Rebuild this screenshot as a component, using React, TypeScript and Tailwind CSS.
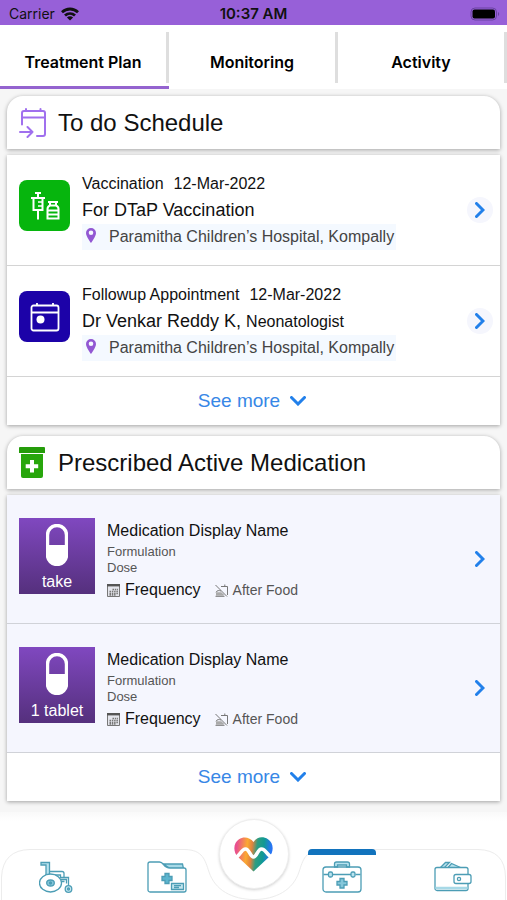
import type { ReactNode } from 'react';

const tabs = ['Treatment Plan', 'Monitoring', 'Activity'];

const schedules = [
  {
    type: 'Vaccination',
    date: '12-Mar-2022',
    title: 'For DTaP Vaccination',
    role: '',
    place: 'Paramitha Children’s Hospital, Kompally',
    icon: <VaccineIcon />,
    color: 'bg-[#06b50d]',
  },
  {
    type: 'Followup Appointment',
    date: '12-Mar-2022',
    title: 'Dr Venkar Reddy K,',
    role: 'Neonatologist',
    place: 'Paramitha Children’s Hospital, Kompally',
    icon: <AppointmentIcon />,
    color: 'bg-[#1c02a8]',
  },
];

const medications = [
  { id: 1, amount: 'take' },
  { id: 2, amount: '1 tablet' },
];

function WifiIcon() {
  return (
    <svg width="18" height="14" viewBox="0 0 18 14" fill="none" stroke="#111" strokeWidth="2.8">
      <path d="M1 5.2C5.6.9 12.4.9 17 5.2" />
      <path d="M4 8.6C6.9 5.9 11.1 5.9 14 8.6" />
      <path d="M9 13.6 5.9 10.5C7.7 8.9 10.3 8.9 12.1 10.5Z" fill="#111" stroke="none" />
    </svg>
  );
}

function BatteryIcon() {
  return (
    <svg width="30" height="14" viewBox="0 0 30 14">
      <rect x="1" y="1" width="25.5" height="12" rx="4" fill="none" stroke="#6a43a3" />
      <rect x="2.5" y="2.5" width="22.5" height="9" rx="2" fill="#000" />
      <path d="M28 5v4c1.6-.6 1.6-3.4 0-4Z" fill="#6a43a3" />
    </svg>
  );
}

function VaccineIcon() {
  return (
    <svg width="30" height="30" viewBox="0 0 30 30" fill="none" stroke="#fff" strokeWidth="2">
      <path d="M5 2h6M8 2v5M1 7h14M3.5 7v12h9V7M8 19v9.5" />
      <path d="M8 11h4M8 15h4" strokeWidth="1.5" />
      <path d="M18 11h10M20 11v3.5M26 11v3.5M20 14.5c-2 .8-2.5 2-2.5 3.5v9.5h11V18c0-1.5-.5-2.7-2.5-3.5Z" />
      <path d="M17.5 19.5h11M17.5 23.5h11" />
    </svg>
  );
}

function AppointmentIcon() {
  return (
    <svg width="30" height="30" viewBox="0 0 30 30" fill="none" stroke="#fff" strokeWidth="1.8">
      <rect x="1.5" y="3.5" width="27" height="25" rx="2" />
      <path d="M1.5 10.5h27M7 1v3M23 1v3" />
      <circle cx="10.5" cy="17.5" r="4" fill="#fff" stroke="none" />
    </svg>
  );
}

function ScheduleIcon() {
  return (
    <svg
      width="28"
      height="30"
      viewBox="0 0 28 30"
      fill="none"
      stroke="#a070ee"
      strokeWidth="2"
      strokeLinecap="round"
      strokeLinejoin="round"
    >
      <path d="M3 16.5V5a2 2 0 0 1 2-2h19a2 2 0 0 1 2 2v21a2 2 0 0 1-2 2h-6" />
      <path d="M3 9.5h23M7 1v2M21.5 1v2M1 24h12.500M8.500 19l5 5-5 5" />
    </svg>
  );
}

function MedicineIcon() {
  return (
    <svg width="28" height="32" viewBox="0 0 28 32">
      <path d="M1 0h24a1 1 0 0 1 1 1v5H0V1a1 1 0 0 1 1-1Z" fill="#259c0a" />
      <path d="M2 7h22v22a2 2 0 0 1-2 2H4a2 2 0 0 1-2-2Z" fill="#28a60c" />
      <path d="M13 13v12.5M6.7 19.2h12.5" stroke="#fff" strokeWidth="4" />
    </svg>
  );
}

function PinIcon() {
  return (
    <svg width="10" height="15" viewBox="0 0 10 15">
      <path
        d="M5 0a5 5 0 0 0-5 5c0 3.6 5 10 5 10s5-6.4 5-10a5 5 0 0 0-5-5Zm0 7a2.3 2.3 0 1 1 0-4.6A2.3 2.3 0 0 1 5 7Z"
        fill="#9258d3"
      />
    </svg>
  );
}

function PillIcon() {
  return (
    <svg width="22" height="42" viewBox="0 0 22 42">
      <rect x="1.5" y="1.5" width="19" height="39" rx="9.5" fill="none" stroke="#fff" strokeWidth="3.4" />
      <path d="M1.5 21h19v10a9.5 9.5 0 0 1-19 0Z" fill="#fff" />
    </svg>
  );
}

function FrequencyIcon() {
  return (
    <svg width="13" height="14" viewBox="0 0 13 14" fill="none" stroke="#777">
      <path d="M.5 1.5h12v12H.5Z" fill="#e4e5ec" />
      <path d="M0 2.2h13" stroke="#555" strokeWidth="2.4" />
      <path d="M5.5 6.5h5.5M2.5 8.5h8.5M2.5 10.5h8.5M2.5 12h6" strokeDasharray="1.5 .8" strokeWidth="1.3" />
    </svg>
  );
}

function NoFoodIcon() {
  return (
    <svg width="13" height="13" viewBox="0 0 13 13" fill="none" stroke="#777">
      <path d="M.5 1 12 12.5M6 2.5h6.5V11M9.8 2.5V.5M.5 12.3h9M1 10.3h7.5M1 8.3c1-2 3-2 5-1.3" />
      <path d="M1 8.3h5.5L9 11.8H1Z" fill="#aaa" stroke="none" />
    </svg>
  );
}

function ChevronRight() {
  return (
    <svg width="10" height="16" viewBox="0 0 10 16" fill="none" stroke="#2280ea" strokeWidth="3">
      <path d="m1.5 1.5 6.5 6.5-6.5 6.5" strokeLinecap="round" />
    </svg>
  );
}

function ChevronDown() {
  return (
    <svg width="16" height="10" viewBox="0 0 16 10" fill="none" stroke="#2280ea" strokeWidth="3">
      <path d="m1.5 1.5 6.5 6.5 6.5-6.5" strokeLinecap="round" />
    </svg>
  );
}

function WheelchairIcon() {
  return (
    <svg width="34" height="32" viewBox="0 0 34 32" fill="none" stroke="#4c9db5" strokeWidth="1.3">
      <path d="M2 1.5h8.5V14H7V4H2Z" fill="#b9e3ef" />
      <path d="M10.5 10.5H23c1.500 0 2 .7 2 2v4M10.500 14h11v3" />
      <ellipse cx="11.5" cy="22" rx="11" ry="9" fill="#fff" />
      <ellipse cx="11.5" cy="22" rx="3.8" ry="3" fill="#86c7da" />
      <circle cx="11.5" cy="22" r="1" fill="#4c9db5" />
      <path d="M21.5 16.5h8v8M21.5 18.5h6v4M22.5 20.5h3" />
      <circle cx="29.5" cy="28" r="3.3" fill="#c6e9f2" />
      <circle cx="29.5" cy="28" r="1" />
    </svg>
  );
}

function FolderIcon() {
  return (
    <svg width="40" height="32" viewBox="0 0 40 32" fill="none" stroke="#4c9db5" strokeWidth="1.3">
      <path d="M17 3h18.5l1 4.5H22Z" fill="#a7d9e7" />
      <path d="M3 1h9.5c2 0 2.5.5 4 2.5C18.5 6 20 7 23 7h14a2 2 0 0 1 2 2v20a2 2 0 0 1-2 2H3a2 2 0 0 1-2-2V3a2 2 0 0 1 2-2Z" fill="#fff" />
      <path d="M18 12.5h4v3h3v4h-3v3h-4v-3h-3v-4h3Z" fill="#5cb5cf" />
      <path d="M24.5 22.5h12v6h-12Z" fill="#c2e5ee" />
      <path d="M27 24.7h7M27 26.5h5" />
    </svg>
  );
}

function KitIcon() {
  return (
    <svg width="40" height="32" viewBox="0 0 40 32" fill="none" stroke="#4c9db5" strokeWidth="1.3">
      <path d="M12.5 6V3a2 2 0 0 1 2-2h11a2 2 0 0 1 2 2v3h-3V4h-9v2Z" fill="#b9e3ef" />
      <rect x="1" y="6" width="38" height="25" rx="3" />
      <path d="M1.5 13.5h5M11 13.5h18M33.5 13.5h5" />
      <rect x="6.5" y="11" width="4" height="5" rx="1.5" fill="#b9e3ef" />
      <rect x="29" y="11" width="4" height="5" rx="1.5" fill="#b9e3ef" />
      <path d="M18 17.5h4v3h3V24h-3v3h-4v-3h-3v-3.5h3Z" fill="#86c7da" />
    </svg>
  );
}

function WalletIcon() {
  return (
    <svg width="38" height="31" viewBox="0 0 38 31" fill="none" stroke="#4c9db5" strokeWidth="1.3">
      <path d="m6.5 6.5 5-5h4l-5 5M14 6.5l3.5-4 9 4" fill="#b9e3ef" />
      <rect x="1" y="6.5" width="33" height="23" rx="2" />
      <path d="M1.5 27h32" stroke="#a7d9e7" strokeWidth="2.5" />
      <rect x="20" y="13.5" width="17" height="9" rx="2" fill="#fff" />
      <circle cx="25" cy="18" r="1.6" />
    </svg>
  );
}

function HeartLogo() {
  return (
    <svg width="39" height="35" viewBox="0 0 39 35">
      <defs>
        <linearGradient id="heart" x1="0" x2="1" y1=".35" y2=".45">
          <stop offset=".05" stopColor="#e8508f" />
          <stop offset=".32" stopColor="#fba931" />
          <stop offset=".45" stopColor="#e0823f" />
          <stop offset=".58" stopColor="#2f9d80" />
          <stop offset=".75" stopColor="#119a93" />
          <stop offset=".95" stopColor="#2774f5" />
        </linearGradient>
      </defs>
      <path
        d="M19.5 34.5 4 20C-1.5 14.5-.5 5.5 5 2.2 10-.8 16 .5 19.5 5 23-.5 29-.8 34 2.2c5.5 3.3 6.5 12.3 1 17.800Z"
        fill="url(#heart)"
      />
      <path
        d="M1 20.5C6 19.5 7 12 11.500 12c4 0 4.500 8 8 8s4-8 8-8c4.500 0 5.500 7 10.500 8"
        fill="none"
        stroke="#fff"
        strokeWidth="3.6"
      />
    </svg>
  );
}

function SectionHeader({ icon, title }: { icon: ReactNode; title: string }) {
  return (
    <header className="flex h-[53px] items-center rounded-t-2xl bg-white px-3 shadow-[0_1px_4px_rgba(0,0,0,0.35)]">
      <div className="flex w-[39px]">{icon}</div>
      <h2 className="text-2xl">{title}</h2>
    </header>
  );
}

function SeeMore() {
  return (
    <button className="flex h-12 w-full items-center justify-center gap-[10px] bg-white pr-[3px] text-[19px] text-[#3787e6]">
      See more
      <ChevronDown />
    </button>
  );
}

function NavItem({ label, active, children }: { label: string; active?: boolean; children: ReactNode }) {
  return (
    <button aria-label={label} className="flex flex-col items-center pl-[2px]">
      <span className={active ? 'h-[6px] w-[68px] rounded-t bg-[#1273bd]' : 'h-[6px]'} />
      <span className="mt-[6px]">{children}</span>
    </button>
  );
}

export default function App() {
  return (
    <div className="overflow-hidden bg-white font-['Liberation_Sans',Arial,sans-serif] text-[#111]">
      <div className="grid h-[25px] grid-cols-3 items-center bg-[#9760d8] px-[7px] pt-[2px] font-[Inter,sans-serif]">
        <div className="flex items-center gap-[6px] pl-[2px] text-sm">
          Carrier
          <WifiIcon />
        </div>
        <p className="text-center text-[15px] leading-5 font-semibold">10:37 AM</p>
        <div className="flex justify-end">
          <BatteryIcon />
        </div>
      </div>

      <nav className="grid h-16 grid-cols-3 font-[Inter,sans-serif] text-base font-semibold text-black">
        {tabs.map((tab, i) => (
          <button
            key={tab}
            className={
              i === 0
                ? 'flex flex-col border-b-[3px] border-[#9463cf] pt-[7px]'
                : 'flex flex-col border-b-[3px] border-transparent pt-[7px]'
            }
          >
            <span className="flex h-[51px] w-full items-center justify-center border-r-[3px] border-[#dedede] pt-2">
              {tab}
            </span>
          </button>
        ))}
      </nav>

      <main className="bg-[#f6f6f6] px-[7px] pt-[7px] pb-[11px]">
        <section>
          <SectionHeader icon={<ScheduleIcon />} title="To do Schedule" />
          <div className="mt-[6px] bg-white shadow-[0_1px_4px_rgba(0,0,0,0.35)]">
            {schedules.map((item) => (
              <article key={item.type} className="flex h-[111px] border-b border-[#d4d4d4] pr-[7px] pl-3">
                <div
                  className={`mt-[25px] flex size-[51px] items-center justify-center rounded-lg ${item.color}`}
                >
                  {item.icon}
                </div>
                <div className="mt-[17px] ml-3 flex-1">
                  <p className="flex gap-[10px] leading-6">
                    <span>{item.type}</span>
                    <span>{item.date}</span>
                  </p>
                  <h3 className="text-lg leading-7">
                    {item.title} <span className="text-base">{item.role}</span>
                  </h3>
                  <p className="flex w-fit gap-[13px] bg-[#f4f9ff] pr-[2px] pl-1 leading-[26px] text-[#444]">
                    <span className="mt-1">
                      <PinIcon />
                    </span>
                    {item.place}
                  </p>
                </div>
                <button
                  aria-label={item.title}
                  className="flex size-[26px] items-center justify-center self-center rounded-full bg-[#f5f6fd]"
                >
                  <ChevronRight />
                </button>
              </article>
            ))}
            <SeeMore />
          </div>
        </section>

        <section className="mt-[11px]">
          <SectionHeader icon={<MedicineIcon />} title="Prescribed Active Medication" />
          <div className="mt-[6px] bg-[#f5f6fe] shadow-[0_1px_4px_rgba(0,0,0,0.35)]">
            {medications.map((item) => (
              <article key={item.id} className="flex h-[129px] border-b border-[#d0d2d8] pr-[7px] pl-3">
                <div className="mt-[23px] flex size-[76px] flex-col items-center bg-linear-to-b from-[#8048c0] to-[#55307d] pt-[6px] text-white">
                  <PillIcon />
                  <p className="mt-1 leading-6">{item.amount}</p>
                </div>
                <div className="mt-6 ml-3 flex-1">
                  <h3 className="leading-6">Medication Display Name</h3>
                  <p className="mt-[1px] text-[13px] leading-4 text-[#555]">Formulation</p>
                  <p className="text-[13px] leading-4 text-[#555]">Dose</p>
                  <div className="mt-[2px] flex items-center leading-6">
                    <FrequencyIcon />
                    <span className="ml-[5px]">Frequency</span>
                    <span className="mr-[5px] ml-[14px]">
                      <NoFoodIcon />
                    </span>
                    <span className="text-sm text-[#555]">After Food</span>
                  </div>
                </div>
                <button aria-label="Medication details" className="flex w-[26px] items-center justify-center">
                  <ChevronRight />
                </button>
              </article>
            ))}
            <SeeMore />
          </div>
        </section>
      </main>

      <footer className="relative h-[88px] bg-linear-to-b from-[#f9f9f9] to-white to-10%">
        <svg
          className="absolute inset-0 size-full"
          viewBox="0 0 507 88"
          preserveAspectRatio="none"
          fill="none"
          stroke="#ececec"
        >
          <path d="M1.5 88V65Q3 38 30 37.500H185C203 38 205 48 209 60 215 78 232 87.500 254 87.500S293 78 299 60C303 48 305 38 323 37.500H478Q505 38 505.500 65V88" />
        </svg>
        <div className="relative grid grid-cols-[1fr_1fr_64px_1fr_1fr] pt-[37px]">
          <NavItem label="Care">
            <WheelchairIcon />
          </NavItem>
          <NavItem label="Records">
            <FolderIcon />
          </NavItem>
          <div className="relative">
            <button
              aria-label="Home"
              className="absolute -top-[30px] left-1/2 flex size-[70px] -translate-x-1/2 items-center justify-center rounded-full border border-[#eee] bg-white shadow-[0_1px_3px_rgba(0,0,0,0.18)]"
            >
              <HeartLogo />
            </button>
          </div>
          <NavItem label="Treatment" active>
            <KitIcon />
          </NavItem>
          <NavItem label="Wallet">
            <WalletIcon />
          </NavItem>
        </div>
      </footer>
    </div>
  );
}
